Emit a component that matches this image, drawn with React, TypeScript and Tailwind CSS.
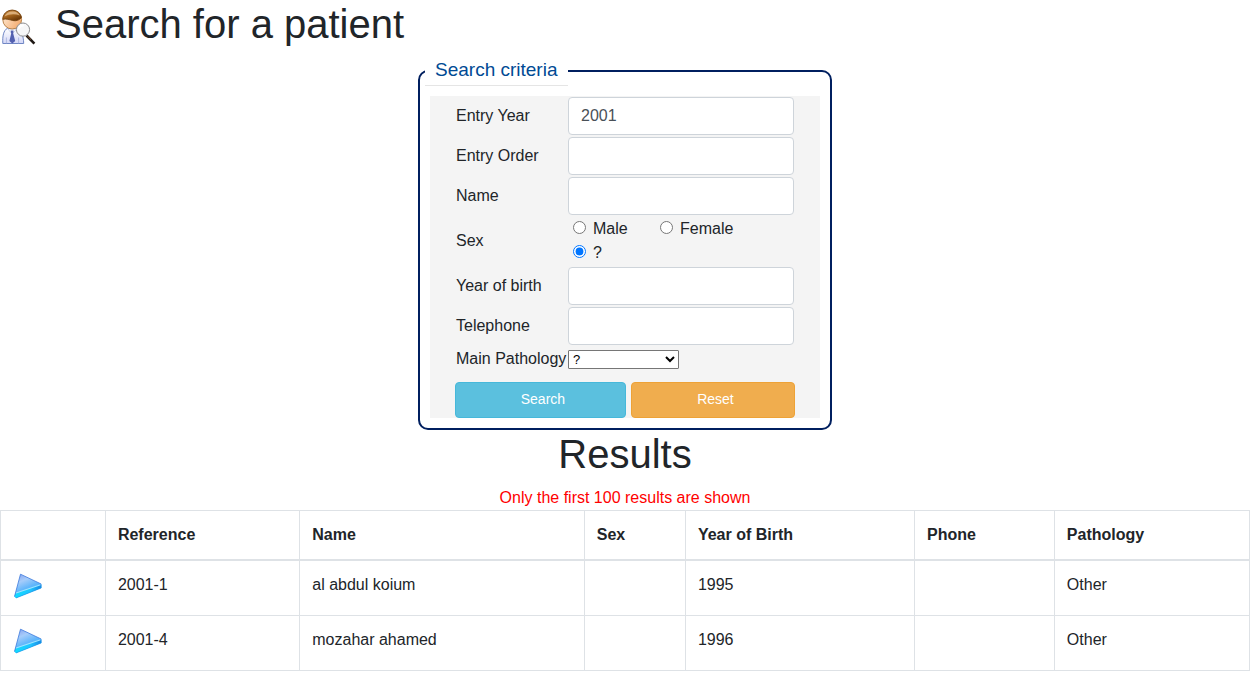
import { useState } from "react";
import type { ReactNode } from "react";

const patients = [
  { reference: "2001-1", name: "al abdul koium", sex: "", year: "1995", phone: "", pathology: "Other" },
  { reference: "2001-4", name: "mozahar ahamed", sex: "", year: "1996", phone: "", pathology: "Other" },
];

const columns = [
  { title: "", width: "w-[8.4%]" },
  { title: "Reference", width: "w-[15.56%]" },
  { title: "Name", width: "w-[22.78%]" },
  { title: "Sex", width: "w-[8.1%]" },
  { title: "Year of Birth", width: "w-[18.34%]" },
  { title: "Phone", width: "w-[11.2%]" },
  { title: "Pathology", width: "w-[15.62%]" },
];

function PatientSearchIcon() {
  return (
    <svg viewBox="0 0 36 36" className="h-9 w-9 shrink-0" aria-hidden="true">
      <defs>
        <linearGradient id="coat" x1="0" y1="0" x2="0" y2="1">
          <stop offset="0" stopColor="#ffffff" />
          <stop offset="1" stopColor="#d3d7f7" />
        </linearGradient>
        <linearGradient id="face" x1="0" y1="0" x2="1" y2=".6">
          <stop offset="0" stopColor="#fff0df" />
          <stop offset="1" stopColor="#f5ae72" />
        </linearGradient>
        <linearGradient id="hair" x1="0" y1="0" x2=".6" y2="1">
          <stop offset="0" stopColor="#c78a45" />
          <stop offset=".5" stopColor="#a9681f" />
          <stop offset="1" stopColor="#6b3806" />
        </linearGradient>
      </defs>
      <path d="M2.8 34.5C2.4 27 3.5 21.3 7.5 19.2H16.5C21.5 21 23.5 27 23.7 34.5Z" fill="url(#coat)" stroke="#6f86c4" strokeWidth="1" />
      <path d="M8 20L12 25L16.8 20Z" fill="#ffffff" stroke="#a9b8e2" strokeWidth=".6" />
      <path d="M10.6 21.5H13.6L13.2 24.5L15.2 32L12.3 34.4L9.4 32L11.2 24.5Z" fill="#5360b0" />
      <path d="M6.4 28.5V34.4M18.6 28.5V34.4" stroke="#a3afdc" strokeWidth=".8" />
      <circle cx="12.2" cy="10.6" r="9.4" fill="url(#face)" stroke="#b9834a" strokeWidth="1" />
      <path d="M2.8 10.4C2.8 5 6.7 1.2 12.2 1.2C17.2 1.2 20.8 4.2 21.5 8.6C19.5 11.2 16 12.4 12.6 11.5C9.5 10.7 6.5 9.5 2.8 10.4Z" fill="url(#hair)" stroke="#70400e" strokeWidth=".8" />
      <path d="M4.6 7.4C6 3.6 10 2 14 2.6C17 3.1 18.8 4.7 19.8 6.5C14.5 4.6 9 5.2 4.6 7.4Z" fill="#e9c394" opacity=".75" />
      <path d="M26.5 26.5L34.4 34.6" stroke="#1d1714" strokeWidth="2.6" />
      <path d="M27.4 27L31 30.6" stroke="#a8683c" strokeWidth=".8" />
      <circle cx="23" cy="20.6" r="6.6" fill="#f7f7f8" stroke="#8e8e90" strokeWidth="1" />
      <path d="M19 20C19.3 17.5 21.2 16.2 23.8 16.4" fill="none" stroke="#ffffff" strokeWidth="2" />
    </svg>
  );
}

function OpenIcon() {
  return (
    <svg viewBox="0 0 30 30" className="block h-[30px] w-[30px]" aria-hidden="true">
      <defs>
        <linearGradient id="arrow" x1=".1" y1="0" x2=".6" y2="1">
          <stop offset="0" stopColor="#86a0ee" />
          <stop offset=".3" stopColor="#a6ccfa" />
          <stop offset=".6" stopColor="#62b6fb" />
          <stop offset="1" stopColor="#2ba4fb" />
        </linearGradient>
        <linearGradient id="edge" x1="0" y1="0" x2="1" y2="0">
          <stop offset="0" stopColor="#10dcff" />
          <stop offset=".6" stopColor="#1fc4ff" />
          <stop offset="1" stopColor="#1788e4" />
        </linearGradient>
      </defs>
      <path d="M7.5 1.2L28.2 11V15L3 25L1.5 23.5Z" fill="url(#arrow)" />
      <path d="M2.4 20.6L28.2 11.3V15L3 25L1.5 23.5Z" fill="url(#edge)" />
      <path d="M3 20L27.6 11.8" stroke="#9fe4ff" strokeWidth="1.2" />
      <path d="M28.2 11L7.5 1.2L1.5 23.5" fill="none" stroke="#3b79dc" strokeWidth=".8" />
      <path d="M28.2 11.5V15L3 25" fill="none" stroke="#1593e4" strokeWidth=".6" />
    </svg>
  );
}

function TextRow({ id, label, value = "" }: { id: string; label: string; value?: string }) {
  return (
    <>
      <label htmlFor={id}>{label}</label>
      <input
        id={id}
        name={id}
        type="text"
        defaultValue={value}
        className="h-[38px] w-full min-w-0 rounded border border-[#ced4da] bg-white px-3 text-[#495057]"
      />
    </>
  );
}

function SexOption({ value, checked, onSelect }: { value: string; checked: boolean; onSelect: (value: string) => void }) {
  return (
    <label className="flex h-6 items-center gap-[7px]">
      <input type="radio" name="sex" value={value} checked={checked} onChange={() => onSelect(value)} className="mb-[3px] h-[13px] w-[13px]" />
      {value}
    </label>
  );
}

function Cell({ children }: { children?: ReactNode }) {
  return <td className="border border-[#dee2e6] p-3 align-top">{children}</td>;
}

export default function App() {
  const [sex, setSex] = useState("?");

  return (
    <main className="bg-white font-['Liberation_Sans',Arial,sans-serif] text-base text-[#212529]">
      <header className="flex h-14 items-start">
        <div className="pt-[9px]">
          <PatientSearchIcon />
        </div>
        <h1 className="ml-[19px] text-[40px] leading-[48px]">Search for a patient</h1>
      </header>

      <form onSubmit={(event) => event.preventDefault()} className="mx-auto w-[414px] max-w-full">
        <fieldset className="rounded-[10px] border-2 border-[#001f5f] px-[5px] pb-2.5">
          <legend className="h-[30px] border-b border-[#e5e5e5] px-2.5 text-[19px] leading-7 text-[#004a94]">Search criteria</legend>
          <div className="mx-[5px] mt-2.5 bg-[#f4f4f4] px-[25px]">
            <div className="grid grid-cols-[110px_1fr] items-center gap-x-0.5 gap-y-0.5 whitespace-nowrap px-px pt-px">
              <TextRow id="entryYear" label="Entry Year" value="2001" />
              <TextRow id="entryOrder" label="Entry Order" />
              <TextRow id="name" label="Name" />
              <span id="sex-label">Sex</span>
              <div role="radiogroup" aria-labelledby="sex-label" className="grid grid-cols-[87px_1fr] pl-[5px]">
                {["Male", "Female", "?"].map((value) => (
                  <SexOption key={value} value={value} checked={sex === value} onSelect={setSex} />
                ))}
              </div>
              <TextRow id="birthYear" label="Year of birth" />
              <TextRow id="telephone" label="Telephone" />
              <label htmlFor="pathology">Main Pathology</label>
              <select id="pathology" name="pathology" className="h-[19px] w-[111px] rounded-[1px] border border-[#767676] bg-white text-[13px] text-black">
                <option>?</option>
                <option>Other</option>
              </select>
            </div>
            <div className="mt-[11px] flex gap-[5px] text-sm text-white">
              <button type="submit" className="h-9 flex-[171] rounded border border-[#46b8da] bg-[#5bc0de] pb-0.5 pl-[5px]">
                Search
              </button>
              <button type="reset" onClick={() => setSex("?")} className="h-9 flex-[164] rounded border border-[#eea236] bg-[#f0ad4e] pb-0.5 pl-[5px]">
                Reset
              </button>
            </div>
          </div>
        </fieldset>
      </form>

      <section className="text-center">
        <h2 className="mb-2 text-[40px] leading-[48px]">Results</h2>
        <p className="text-[#ff0000]">Only the first 100 results are shown</p>
        <table className="w-full table-fixed border-collapse border border-[#dee2e6] text-left">
          <thead>
            <tr>
              {columns.map((column) => (
                <th key={column.title} scope="col" className={`${column.width} h-[49px] border border-b-2 border-[#dee2e6] px-3 font-bold`}>
                  {column.title}
                </th>
              ))}
            </tr>
          </thead>
          <tbody>
            {patients.map((patient) => (
              <tr key={patient.reference}>
                <Cell>
                  <button type="button" aria-label={`Open ${patient.reference}`} className="block">
                    <OpenIcon />
                  </button>
                </Cell>
                <Cell>{patient.reference}</Cell>
                <Cell>{patient.name}</Cell>
                <Cell>{patient.sex}</Cell>
                <Cell>{patient.year}</Cell>
                <Cell>{patient.phone}</Cell>
                <Cell>{patient.pathology}</Cell>
              </tr>
            ))}
          </tbody>
        </table>
      </section>
    </main>
  );
}
